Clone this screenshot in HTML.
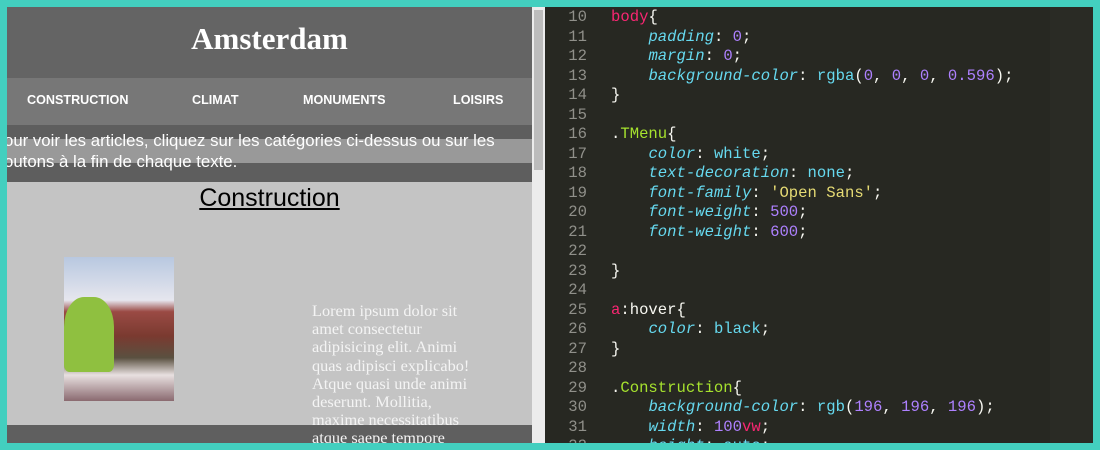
<!DOCTYPE html>
<html><head><meta charset="utf-8"><style>
*{margin:0;padding:0;box-sizing:border-box}
body{width:1100px;height:450px;background:#43cfbf;position:relative;overflow:hidden}
#left{position:absolute;left:7px;top:7px;width:525px;height:436px;background:#c4c4c4;overflow:hidden}
.hdr{position:absolute;left:0;top:0;width:525px;height:71px;background:#646464}
.hdr h1{font:bold 31px "Liberation Serif",serif;color:#fff;text-align:center;line-height:64px}
.nav{position:absolute;left:0;top:71px;width:525px;height:47px;background:#777}
.nav span{position:absolute;top:15px;font:bold 12.6px "Liberation Sans",sans-serif;color:#fff}
.band1{position:absolute;left:0;top:118px;width:525px;height:57px;background:#5e5e5e}
.band2{position:absolute;left:0;top:132px;width:525px;height:24px;background:#999}
.intro{position:absolute;left:-3px;top:123px;width:540px;font:16.8px/21px "Liberation Sans",sans-serif;color:#fff;white-space:nowrap}
.ct{position:absolute;left:0;top:177px;width:525px;text-align:center;font:25px "Liberation Sans",sans-serif;color:#000;text-decoration:underline}
.img{position:absolute;left:57px;top:250px;width:110px;height:144px;background:linear-gradient(#b8c8e0 0,#e6e6ee 30%,#9a4a44 38%,#7a3a30 55%,#5a5040 70%,#e8e0e0 82%,#8a6a70 100%)}
.tree{position:absolute;left:57px;top:290px;width:50px;height:75px;background:#8fc040;border-radius:40% 40% 10% 10%}
.lorem{position:absolute;left:305px;top:295px;white-space:nowrap;font:16.3px/18.2px "Liberation Serif",serif;color:#f4f4f4}
.foot{position:absolute;left:0;top:418px;width:525px;height:18px;background:#5f5f5f}
#sb{position:absolute;left:532px;top:7px;width:13px;height:436px;background:#ececec}
#sb div{position:absolute;left:2px;top:3px;width:9px;height:160px;background:#bcbcbc}
#ed{position:absolute;left:545px;top:7px;width:548px;height:436px;background:#272822;overflow:hidden}
.ln{position:absolute;left:0;width:42px;text-align:right;color:#90908a}
.code{position:absolute;left:66px;white-space:pre;color:#f8f8f2}
.row{position:absolute;left:0;height:19.5px;font:15.6px/19.5px "Liberation Mono","DejaVu Sans Mono",monospace;margin-top:3px}
.r{color:#f92672}.p{color:#66d9ef;font-style:italic}.c{color:#66d9ef}.n{color:#ae81ff}.g{color:#a6e22e}.y{color:#e6db74}
#mm{position:absolute;left:1050px;top:7px;width:43px;height:436px;background:#2a2b25}
</style></head><body>
<div id="left">
<div class="hdr"><h1>Amsterdam</h1></div>
<div class="nav"><span style="left:20px">CONSTRUCTION</span><span style="left:185px">CLIMAT</span><span style="left:296px">MONUMENTS</span><span style="left:446px">LOISIRS</span></div>
<div class="band1"></div><div class="band2"></div>
<div class="intro">our voir les articles, cliquez sur les catégories ci-dessus ou sur les<br>outons à la fin de chaque texte.</div>
<div class="ct">Construction</div>
<div class="img"></div><div class="tree"></div>
<div class="foot"></div>
<div class="lorem">Lorem ipsum dolor sit<br>amet consectetur<br>adipisicing elit. Animi<br>quas adipisci explicabo!<br>Atque quasi unde animi<br>deserunt. Mollitia,<br>maxime necessitatibus<br>atque saepe tempore</div>
</div>
<div id="sb"><div></div></div>
<div id="ed">
<div class="row" style="top:-2px"><span class="ln">10</span><span class="code"><span class="r">body</span>{</span></div>
<div class="row" style="top:17.5px"><span class="ln">11</span><span class="code">    <span class="p">padding</span>: <span class="n">0</span>;</span></div>
<div class="row" style="top:37px"><span class="ln">12</span><span class="code">    <span class="p">margin</span>: <span class="n">0</span>;</span></div>
<div class="row" style="top:56.5px"><span class="ln">13</span><span class="code">    <span class="p">background-color</span>: <span class="c">rgba</span>(<span class="n">0</span>, <span class="n">0</span>, <span class="n">0</span>, <span class="n">0.596</span>);</span></div>
<div class="row" style="top:76px"><span class="ln">14</span><span class="code">}</span></div>
<div class="row" style="top:95.5px"><span class="ln">15</span></div>
<div class="row" style="top:115px"><span class="ln">16</span><span class="code">.<span class="g">TMenu</span>{</span></div>
<div class="row" style="top:134.5px"><span class="ln">17</span><span class="code">    <span class="p">color</span>: <span class="c">white</span>;</span></div>
<div class="row" style="top:154px"><span class="ln">18</span><span class="code">    <span class="p">text-decoration</span>: <span class="c">none</span>;</span></div>
<div class="row" style="top:173.5px"><span class="ln">19</span><span class="code">    <span class="p">font-family</span>: <span class="y">'Open Sans'</span>;</span></div>
<div class="row" style="top:193px"><span class="ln">20</span><span class="code">    <span class="p">font-weight</span>: <span class="n">500</span>;</span></div>
<div class="row" style="top:212.5px"><span class="ln">21</span><span class="code">    <span class="p">font-weight</span>: <span class="n">600</span>;</span></div>
<div class="row" style="top:232px"><span class="ln">22</span></div>
<div class="row" style="top:251.5px"><span class="ln">23</span><span class="code">}</span></div>
<div class="row" style="top:271px"><span class="ln">24</span></div>
<div class="row" style="top:290.5px"><span class="ln">25</span><span class="code"><span class="r">a</span>:hover{</span></div>
<div class="row" style="top:310px"><span class="ln">26</span><span class="code">    <span class="p">color</span>: <span class="c">black</span>;</span></div>
<div class="row" style="top:329.5px"><span class="ln">27</span><span class="code">}</span></div>
<div class="row" style="top:349px"><span class="ln">28</span></div>
<div class="row" style="top:368.5px"><span class="ln">29</span><span class="code">.<span class="g">Construction</span>{</span></div>
<div class="row" style="top:388px"><span class="ln">30</span><span class="code">    <span class="p">background-color</span>: <span class="c">rgb</span>(<span class="n">196</span>, <span class="n">196</span>, <span class="n">196</span>);</span></div>
<div class="row" style="top:407.5px"><span class="ln">31</span><span class="code">    <span class="p">width</span>: <span class="n">100</span><span class="r">vw</span>;</span></div>
<div class="row" style="top:427px"><span class="ln">32</span><span class="code">    <span class="p">height</span>: <span class="c">auto</span>;</span></div>
</div>
<div id="mm"></div>
</body></html>
